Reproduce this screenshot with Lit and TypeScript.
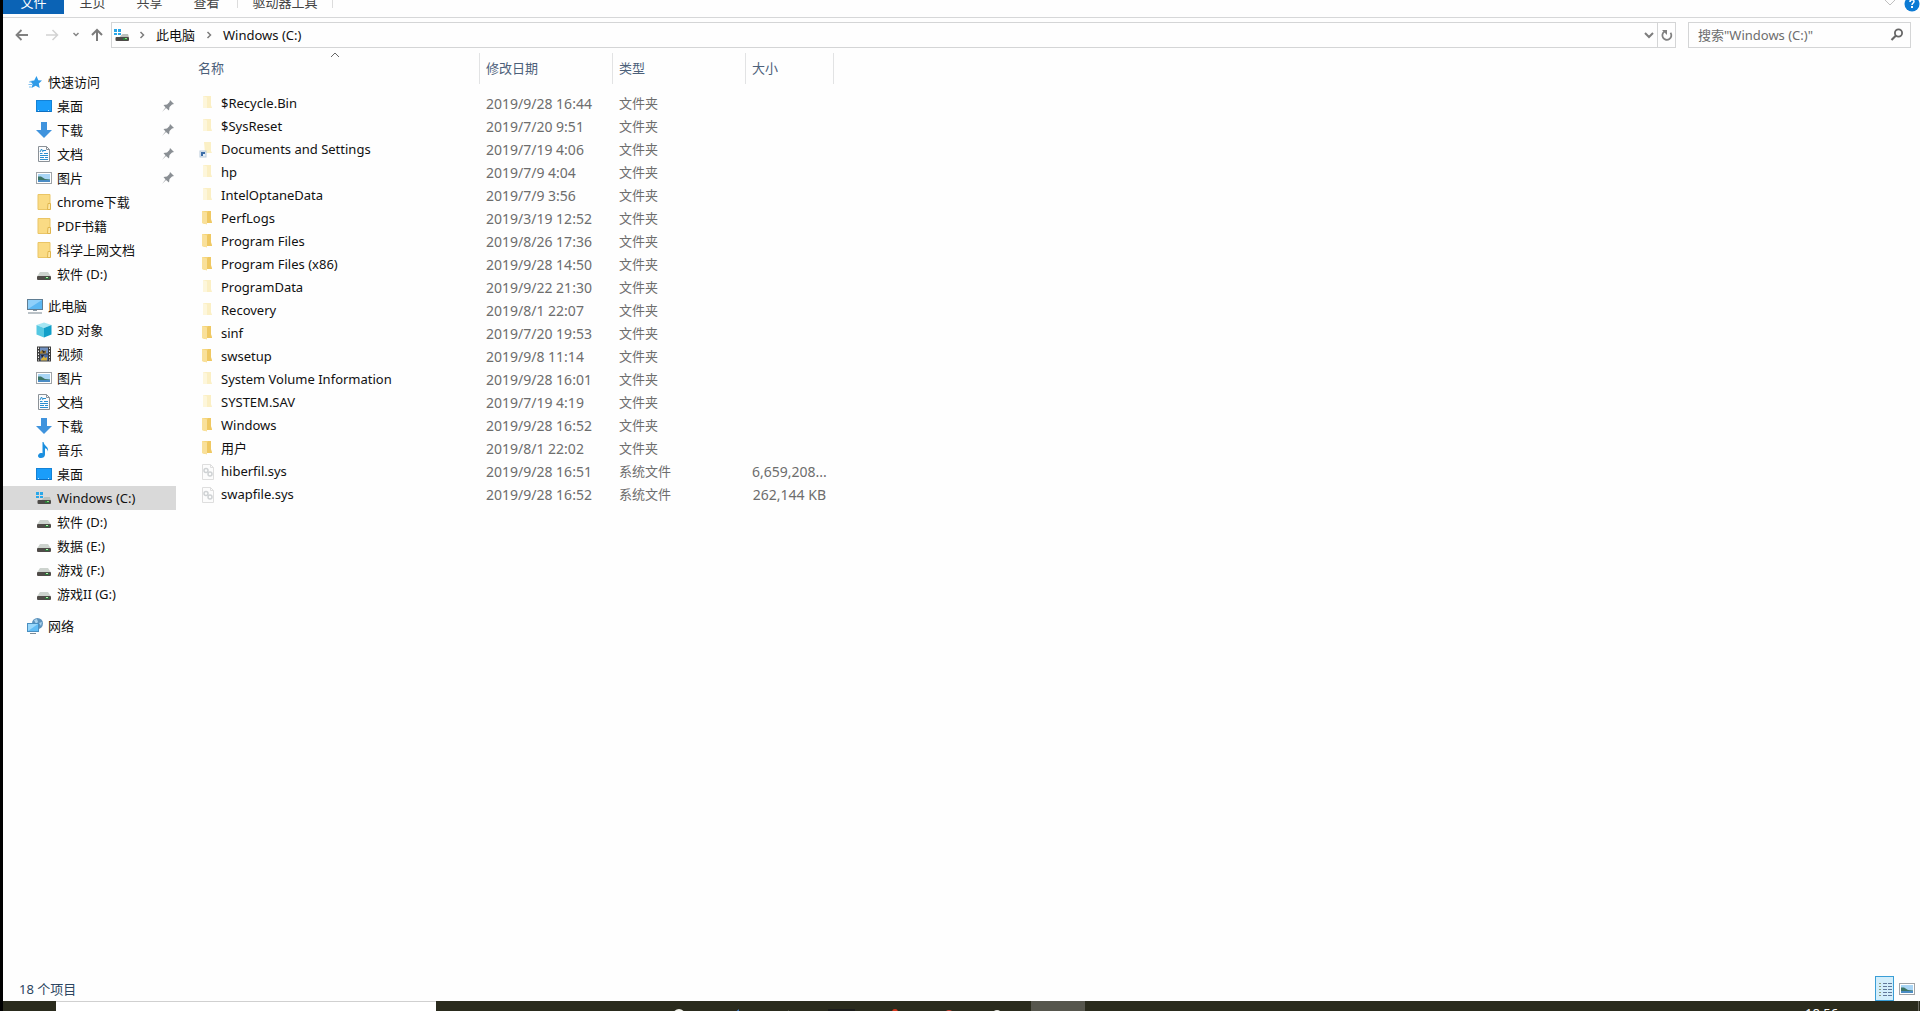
import { LitElement, html, css, svg } from "lit";
import { customElement } from "lit/decorators.js";
import { classMap } from "lit/directives/class-map.js";

const drive = svg`
  <path d="M4 6h8l3 4.500H1z" fill="#cdd3ce"/>
  <rect x="1" y="10" width="14" height="4" rx="1" fill="#504c49"/>
  <rect x="9" y="11" width="4" height="2" fill="#2f6f3c"/>
  <rect x="10" y="11" width="2" height="1" fill="#b9f5b4"/>`;

const winLogo = svg`
  <g fill="#2aa7e8"><rect x="0" y="2" width="3" height="3"/><rect x="4" y="2" width="3" height="3"/>
  <rect x="0" y="6" width="3" height="2"/><rect x="4" y="6" width="3" height="2"/></g>`;

const glyphs: Record<string, unknown> = {
  star: svg`<path d="M9.500 2l1.800 4.200 3.700.2-3.200 3 .9 4.600-4-2.200L4.500 14l1.100-4.100L3 7l4.200-.4z" fill="#2f9be8"/>
    <path d="M2 8h3M1.500 10.500h3.500M2 13h2.500" stroke="#7fc0ef" stroke-width="1"/>`,
  desktop: svg`<rect x=".5" y="2.500" width="15" height="11" fill="#1a9dfa" stroke="#1482d6"/>
    <path d="M1 13.500h14" stroke="#0f6fc0"/><path d="M2 12.500h1M12 12.500h1" stroke="#bfe4ff"/>`,
  download: svg`<path d="M5 0h6v8h5l-8 8-8-8h5z" fill="#3f93dd"/>`,
  document: svg`<path d="M2.500.5h8l3 3v12h-11z" fill="#fbfcfd" stroke="#8b9197"/><path d="M10.500.5v3h3" fill="none" stroke="#8b9197"/>
    <path d="M7 4.500h3M4 7.500h2.500M8 7.500h4M4 9.500h8M4 11.500h4M9 11.500h3M4 13.500h8" stroke="#2a8fd0"/><path d="M4 6l1.500-3L7 6" fill="none" stroke="#2a8fd0"/>`,
  picture: svg`<rect x=".5" y="2.500" width="15" height="11" fill="#fff" stroke="#a0a4a8"/>
    <rect x="2" y="4" width="12" height="8" fill="#a9d5f5"/><path d="M2 6.500h3l4 2.500 5 .5V11H2z" fill="#3d7565"/><path d="M2 10h12v2H2z" fill="#4b8cc4"/>`,
  folder: svg`<path d="M2 .5h12v15H2z" fill="#fadb84" stroke="#eac566"/><path d="M12 9.500h2.500v6h-3z" fill="#ffe9a8" stroke="#e0b64e"/>`,
  drive,
  windrive: svg`${winLogo}<path d="M8.500 7h5.500l1 3.500H5z" fill="#bcc1bd"/><rect x="1.500" y="10" width="13.500" height="4" rx="1" fill="#4c4a47"/>
    <rect x="9" y="11" width="4" height="2" fill="#2f7a3c"/><rect x="11" y="11" width="2" height="1" fill="#7fe07a"/>`,
  pc: svg`<rect x=".5" y="1.500" width="15" height="10" fill="#5bb7f2" stroke="#5f7d93"/><path d="M1 2h14L1 11z" fill="#8fd0fa"/>
    <path d="M6 12h4v1H6z" fill="#8b9aa5"/><path d="M1 15h14" stroke="#76858f"/>`,
  cube: svg`<path d="M8 .5l7.500 2.500-7.500 3L.5 3z" fill="#a5e6f3"/><path d="M.5 3L8 6v9.500L.5 12.500z" fill="#55c8e2"/><path d="M15.500 3L8 6v9.500l7.500-3z" fill="#119fc9"/>`,
  video: svg`<rect x="1" y=".5" width="14" height="15" fill="#3b3b3b"/><path d="M2.500 1.500v13M13.500 1.500v13" stroke="#eee" stroke-width="1" stroke-dasharray="1.500 1.500"/>
    <rect x="4" y="1.500" width="8" height="6" fill="#6f8fc0"/><rect x="4" y="8.500" width="8" height="6" fill="#4b6da8"/>
    <path d="M4 6l2-2 2 2 2-2v3.500H4z" fill="#a9822f"/><path d="M5 13l3-3 1 2 2-1v3.500H5z" fill="#d8b03a"/><path d="M6 4l4 2-3 1zM5 9h3l-2 3z" fill="#29262a"/>`,
  music: svg`<path d="M7.500 0c.5 4 5.500 4.500 4.500 9.500-.5-2.500-2-3-3-3.200V12.500C9 15 7 16 5 16c-3 0-3.500-2.200-2.500-3.500 1-1.400 3-1.700 4-1.200V0z" fill="#1b8fdf"/>`,
  network: svg`<circle cx="10.500" cy="5.500" r="5.500" fill="#5d93bd"/><path d="M7 2l3-1 1 3-2 2zM12 5l3-1-1 4z" fill="#a9d3ee"/>
    <rect x=".5" y="5.500" width="11" height="8" fill="#62bdf5" stroke="#4a8fc0"/><path d="M1 6h10L1 13z" fill="#9ad8fb"/><path d="M3 15.500h6" stroke="#7b8c98"/>`,
  pin: svg`<path d="M10 2l4 4-2 .5-2.500 2.500-.5 3.500-3-2.500L2 14l3.500-4.500L3.500 7 7 6.500 9.500 4z" fill="#8a8f94"/>`,
  dir: svg`<path d="M1 0h9v9l1 3H6v1H4l-3-1z" fill="#f5d578"/><path d="M1 0l5 1.500V13.500L1 12z" fill="#f9e09a"/><path d="M7 0h3v8l1 4H6V2z" fill="#efc862"/>`,
  hidden: svg`<path d="M2 0h8v9l1 3H4l-2-1z" fill="#fbefc4"/><path d="M2 0l4 1.500V12H2z" fill="#fdf6db"/>`,
  link: svg`<path d="M3 0h7v9l1 2H4z" fill="#fbf0c6"/><rect x="-1" y="9" width="6" height="6" fill="#e8f0f8" stroke="#b9c9d9"/><path d="M0 14V10h4v2H2v2z" fill="#3c6da8"/>`,
  sys: svg`<path d="M1.500.5h8l3 3v12h-11z" fill="#fcfcfc" stroke="#dedede"/><path d="M9.500.5v3h3" fill="none" stroke="#dedede"/>
    <circle cx="5" cy="6.500" r="2" fill="none" stroke="#cfd2d4" stroke-width="1.500"/><circle cx="9" cy="10" r="2" fill="none" stroke="#cfd2d4" stroke-width="1.500"/>`,
  back: svg`<path d="M14 8H3M7.500 3L2.500 8l5 5" fill="none" stroke="#808080" stroke-width="1.800"/>`,
  forward: svg`<path d="M2 8h11M8.500 3l5 5-5 5" fill="none" stroke="#d2d2d2" stroke-width="1.500"/>`,
  up: svg`<path d="M8 14V3M3 8l5-5 5 5" fill="none" stroke="#7b7b7b" stroke-width="2"/>`,
  down: svg`<path d="M4 6l4 4 4-4" fill="none" stroke="#7d7d7d" stroke-width="2"/>`,
  smalldown: svg`<path d="M5.500 6l2.500 2.500L10.500 6" fill="none" stroke="#858585" stroke-width="1.500"/>`,
  next: svg`<path d="M6.500 5l3 3-3 3" fill="none" stroke="#7d7d7d" stroke-width="1.500"/>`,
  sort: svg`<path d="M4 10l4-4 4 4" fill="none" stroke="#666"/>`,
  refresh: svg`<path d="M5.500 4.500a4.500 4.500 0 1 0 6 1.200" fill="none" stroke="#808080" stroke-width="1.800"/><path d="M3 3h5v5z" fill="#808080"/>`,
  search: svg`<circle cx="9.500" cy="6" r="3.600" fill="none" stroke="#666" stroke-width="1.800"/><path d="M7 8.500L2.500 13" stroke="#666" stroke-width="2.200"/>`,
  collapse: svg`<path d="M3 -1l5 5 5-5" fill="none" stroke="#c0c0c0"/>`,
  help: svg`<circle cx="8" cy="3" r="7.500" fill="#0d7bd4"/><path d="M6 1c0-3 4-3 4-.5C10 2 8 2 8 4" fill="none" stroke="#fff" stroke-width="1.500"/><rect x="7" y="5" width="2" height="2" fill="#fff"/>`,
  details: svg`<g stroke="#8a9a7c"><path d="M2 2.500h2M2 5.500h2M2 8.500h2M2 11.500h2M2 14.500h2"/></g><g stroke="#62799b"><path d="M6 2.500h4M11 2.500h4M6 5.500h4M11 5.500h4M6 8.500h4M11 8.500h4M6 11.500h4M11 11.500h4M6 14.500h4M11 14.500h4"/></g>`,
};

const icon = (name: string) => html`<svg class="icon" viewBox="0 0 16 16" width="16" height="16" aria-hidden="true">${glyphs[name]}</svg>`;

interface Place { icon: string; label: string; pinned?: boolean; current?: boolean }

const groups: { head: Place; items: Place[] }[] = [
  {
    head: { icon: "star", label: "快速访问" },
    items: [
      { icon: "desktop", label: "桌面", pinned: true },
      { icon: "download", label: "下载", pinned: true },
      { icon: "document", label: "文档", pinned: true },
      { icon: "picture", label: "图片", pinned: true },
      { icon: "folder", label: "chrome下载" },
      { icon: "folder", label: "PDF书籍" },
      { icon: "folder", label: "科学上网文档" },
      { icon: "drive", label: "软件 (D:)" },
    ],
  },
  {
    head: { icon: "pc", label: "此电脑" },
    items: [
      { icon: "cube", label: "3D 对象" },
      { icon: "video", label: "视频" },
      { icon: "picture", label: "图片" },
      { icon: "document", label: "文档" },
      { icon: "download", label: "下载" },
      { icon: "music", label: "音乐" },
      { icon: "desktop", label: "桌面" },
      { icon: "windrive", label: "Windows (C:)", current: true },
      { icon: "drive", label: "软件 (D:)" },
      { icon: "drive", label: "数据 (E:)" },
      { icon: "drive", label: "游戏 (F:)" },
      { icon: "drive", label: "游戏II (G:)" },
    ],
  },
  { head: { icon: "network", label: "网络" }, items: [] },
];

type Entry = [icon: string, name: string, date: string, type: string, size: string];

const entries: Entry[] = [
  ["hidden", "$Recycle.Bin", "2019/9/28 16:44", "文件夹", ""],
  ["hidden", "$SysReset", "2019/7/20 9:51", "文件夹", ""],
  ["link", "Documents and Settings", "2019/7/19 4:06", "文件夹", ""],
  ["hidden", "hp", "2019/7/9 4:04", "文件夹", ""],
  ["hidden", "IntelOptaneData", "2019/7/9 3:56", "文件夹", ""],
  ["dir", "PerfLogs", "2019/3/19 12:52", "文件夹", ""],
  ["dir", "Program Files", "2019/8/26 17:36", "文件夹", ""],
  ["dir", "Program Files (x86)", "2019/9/28 14:50", "文件夹", ""],
  ["hidden", "ProgramData", "2019/9/22 21:30", "文件夹", ""],
  ["hidden", "Recovery", "2019/8/1 22:07", "文件夹", ""],
  ["dir", "sinf", "2019/7/20 19:53", "文件夹", ""],
  ["dir", "swsetup", "2019/9/8 11:14", "文件夹", ""],
  ["hidden", "System Volume Information", "2019/9/28 16:01", "文件夹", ""],
  ["hidden", "SYSTEM.SAV", "2019/7/19 4:19", "文件夹", ""],
  ["dir", "Windows", "2019/9/28 16:52", "文件夹", ""],
  ["dir", "用户", "2019/8/1 22:02", "文件夹", ""],
  ["sys", "hiberfil.sys", "2019/9/28 16:51", "系统文件", "6,659,208..."],
  ["sys", "swapfile.sys", "2019/9/28 16:52", "系统文件", "262,144 KB"],
];

@customElement("app-root")
export class AppRoot extends LitElement {
  static styles = css`
    :host {
      display: flex;
      flex-direction: column;
      box-sizing: border-box;
      min-height: 100vh;
      border-left: 3px solid #000;
      background: #fefefe;
      color: #111;
      font: 13px/24px "Noto Sans", "Noto Sans CJK SC", sans-serif;
    }
    * { box-sizing: border-box; }
    button, input { margin: 0; padding: 0; border: 0; background: none; color: inherit; font: inherit; }
    a { color: inherit; text-decoration: none; }
    ul { list-style: none; margin: 0; padding: 0; }
    .icon { display: block; flex: none; overflow: visible; }

    .ribbon { display: flex; height: 18px; border-bottom: 1px solid #d6d7d8; overflow: hidden; }
    .tab { width: 57px; height: 14px; line-height: 5px; color: #444; display: flex; justify-content: center; }
    .tab.file { width: 61px; background: #0b63b5; color: #fff; }
    .tab.tools { width: 96px; margin-left: 2px; height: 8px; border: solid #dcdcdc; border-width: 0 1px; }
    .ribbon-end { margin-left: auto; display: flex; gap: 6px; }

    .bar { display: flex; align-items: center; padding: 4px 9px 0 11px; }
    .nav-buttons { display: flex; align-items: center; width: 97px; padding-right: 6px; }
    .nav-buttons button + button { margin-left: 14px; }
    .nav-buttons button + .near { margin-left: 8px; }
    .nav-buttons .near + .near { margin-left: 5px; }
    .address { flex: 1; display: flex; align-items: center; height: 26px; border: 1px solid #d4d5d6; padding-left: 2px; }
    .crumbs { flex: 1; display: flex; align-items: center; }
    .crumbs .sep { margin: 0 6px; display: flex; }
    .crumbs .icon + .sep { margin-left: 4px; }
    .address button { height: 24px; display: flex; align-items: center; }
    .address .refresh { width: 18px; border-left: 1px solid #d4d5d6; padding-left: 1px; }
    .search { width: 223px; height: 26px; margin-left: 12px; border: 1px solid #d4d5d6; padding: 0 5px 0 9px; display: flex; align-items: center; }
    .search input { flex: 1; min-width: 0; outline: 0; }
    .search input::placeholder { color: #6d6d6d; opacity: 1; }

    .body { flex: 1; display: flex; }
    .places { flex: none; width: 187px; padding: 22px 14px 0 0; }
    .group { margin-bottom: 8px; }
    .place { display: flex; align-items: center; gap: 5px; height: 24px; padding-left: 33px; white-space: nowrap; }
    .place.head { padding-left: 24px; }
    .place.current { background: #d9d9d9; }
    .place .name { flex: 1; }

    .files { flex: 1; padding-top: 5px; }
    table { table-layout: fixed; border-collapse: separate; border-spacing: 0; width: 644px; }
    .c-name { width: 290px; }
    .c-mid { width: 133px; }
    .c-size { width: 88px; }
    th { position: relative; height: 31px; padding: 0 0 0 6px; border-right: 1px solid #e2e3e4; text-align: left; font-weight: 400; color: #4c607a; }
    th:first-child { padding-left: 8px; }
    th button { display: block; width: 100%; text-align: left; line-height: 31px; }
    .sort { position: absolute; left: 50%; top: -6px; margin-left: -8px; }
    .gap td { height: 8px; }
    td { height: 23px; padding: 0 0 0 6px; line-height: 23px; color: #6d6d6d; white-space: nowrap; }
    .cell { display: flex; align-items: center; gap: 4px; padding-left: 5px; color: #111; }
    .date, .size { font-size: 14px; }
    .size { text-align: right; padding-right: 8px; }

    .status { display: flex; align-items: center; justify-content: space-between; height: 26px; padding: 1px 5px 0 16px; color: #2c4560; }
    .views { display: flex; gap: 4px; align-items: center; }
    .views button { width: 17px; height: 24px; display: flex; align-items: center; justify-content: center; }
    .views .on { width: 19px; height: 25px; border: 1px solid #3a9ed6; background: #d3eefb; }

    .taskbar { display: flex; height: 10px; background: #2a2b1d; overflow: hidden; color: #fff; }
    .start { width: 53px; }
    .query { width: 380px; background: #fff; border-top: 1px solid #d0d0d0; }
    .apps { display: flex; flex: 1; padding-left: 217px; }
    .apps button { width: 54px; height: 10px; display: flex; justify-content: center; }
    .apps .on { background: #56564d; }
    .clock { width: 34px; margin-right: 79px; padding-top: 5px; line-height: 14px; }
    .show { width: 2px; border-left: 1px solid #6c6c63; }
  `;

  private place(p: Place, head = false) {
    return html`<a href="#" class=${classMap({ place: true, head, current: !!p.current })}>
      ${icon(p.icon)}<span class="name">${p.label}</span>${p.pinned ? icon("pin") : ""}
    </a>`;
  }

  private task(label: string, mark: unknown, on = false) {
    return html`<button class=${classMap({ on })} aria-label=${label}>
      <svg class="icon" viewBox="0 0 54 10" width="54" height="10" aria-hidden="true">${mark}</svg>
    </button>`;
  }

  render() {
    return html`
      <header class="ribbon">
        <button class="tab file">文件</button>
        <button class="tab">主页</button>
        <button class="tab">共享</button>
        <button class="tab">查看</button>
        <button class="tab tools">驱动器工具</button>
        <div class="ribbon-end">
          <button aria-label="展开功能区">${icon("collapse")}</button>
          <button aria-label="帮助">${icon("help")}</button>
        </div>
      </header>

      <div class="bar">
        <div class="nav-buttons">
          <button aria-label="后退">${icon("back")}</button>
          <button aria-label="前进">${icon("forward")}</button>
          <button class="near" aria-label="最近位置">${icon("smalldown")}</button>
          <button class="near" aria-label="上移">${icon("up")}</button>
        </div>
        <div class="address">
          <div class="crumbs">
            ${icon("windrive")}<span class="sep">${icon("next")}</span>
            <a href="#">此电脑</a><span class="sep">${icon("next")}</span>
            <a href="#">Windows (C:)</a>
          </div>
          <button aria-label="以前的位置">${icon("down")}</button>
          <button class="refresh" aria-label="刷新">${icon("refresh")}</button>
        </div>
        <label class="search">
          <input type="text" aria-label="搜索" placeholder='搜索"Windows (C:)"' />${icon("search")}
        </label>
      </div>

      <div class="body">
        <nav class="places">
          ${groups.map((g) => html`<ul class="group">
            <li>${this.place(g.head, true)}</li>
            ${g.items.map((p) => html`<li>${this.place(p)}</li>`)}
          </ul>`)}
        </nav>
        <main class="files">
          <table>
            <colgroup><col class="c-name" /><col class="c-mid" /><col class="c-mid" /><col class="c-size" /></colgroup>
            <thead>
              <tr>
                <th><button>名称</button><span class="sort">${icon("sort")}</span></th>
                <th><button>修改日期</button></th>
                <th><button>类型</button></th>
                <th><button>大小</button></th>
              </tr>
            </thead>
            <tbody>
              <tr class="gap"><td colspan="4"></td></tr>
              ${entries.map(([ic, name, date, type, size]) => html`<tr>
                <td><span class="cell">${icon(ic)}<span>${name}</span></span></td>
                <td class="date">${date}</td>
                <td>${type}</td>
                <td class="size">${size}</td>
              </tr>`)}
            </tbody>
          </table>
        </main>
      </div>

      <footer class="status">
        <span>18 个项目</span>
        <div class="views">
          <button class="on" aria-label="详细信息">${icon("details")}</button>
          <button aria-label="大图标">${icon("picture")}</button>
        </div>
      </footer>

      <div class="taskbar">
        <button class="start" aria-label="开始"></button>
        <input class="query" type="text" aria-label="搜索" />
        <div class="apps">
          ${this.task("搜索", svg`<circle cx="26" cy="14" r="5" fill="none" stroke="#f2f2ea" stroke-width="2"/>`)}
          ${this.task("编辑器", svg`<path d="M26 13l6-5v5z" fill="#3f78c0"/>`)}
          ${this.task("任务", svg`<path d="M27 9h1v1h-1z" fill="#4a4b40"/>`)}
          ${this.task("终端", svg`<rect x="13" y="8" width="27" height="2" fill="#1c1d1c"/>`)}
          ${this.task("浏览器", svg`<circle cx="26" cy="11" r="3" fill="#d8381e"/>`)}
          ${this.task("播放器", svg`<circle cx="26" cy="14" r="5" fill="#d1473a"/>`)}
          ${this.task("消息", svg`<circle cx="20" cy="13" r="4" fill="#e9e9e2"/>`)}
          ${this.task("文件资源管理器", svg``, true)}
        </div>
        <span class="clock">18:56</span>
        <span class="show"></span>
      </div>
    `;
  }
}
